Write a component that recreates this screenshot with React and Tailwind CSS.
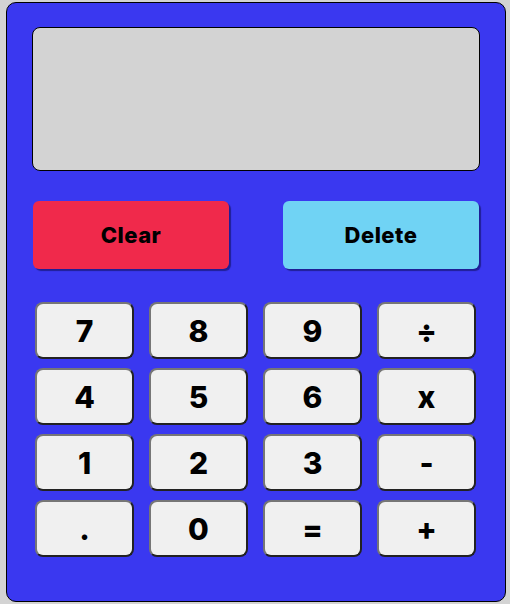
import React, { useState } from "react";

const keys = ["7", "8", "9", "÷", "4", "5", "6", "x", "1", "2", "3", "-", ".", "0", "=", "+"];

function App() {
  const [display, setDisplay] = useState("");

  const press = (k) => {
    if (k === "=") {
      try {
        const expr = display.replace(/÷/g, "/").replace(/x/g, "*");
        // eslint-disable-next-line no-new-func
        setDisplay(String(Function(`return (${expr})`)()));
      } catch (err) {
        setDisplay("Error");
      }
      return;
    }
    setDisplay(display + k);
  };

  return (
    <div className="min-h-screen bg-[#d3d3d3] pt-[2px] pl-[6px]" style={{ fontFamily: "Inter, 'Noto Sans', sans-serif" }}>
      <div className="w-[500px] h-[600px] bg-[#3a38f0] border border-black rounded-[10px] px-[25px] pt-[24px]">
        <div className="h-[144px] bg-[#d3d3d3] border border-black rounded-[8px] flex items-center justify-end px-4 text-[36px] font-bold text-black overflow-hidden">
          {display}
        </div>

        <div className="flex justify-between mt-[30px] px-[1px]">
          <button
            onClick={() => setDisplay("")}
            className="w-[196px] h-[68px] bg-[#f0294b] rounded-[6px] text-[22px] font-extrabold tracking-[0.5px] text-black shadow-[2px_2px_1px_rgba(0,0,40,0.45)]"
          >
            Clear
          </button>
          <button
            onClick={() => setDisplay(display.slice(0, -1))}
            className="w-[196px] h-[68px] bg-[#70d3f4] rounded-[6px] text-[22px] font-extrabold tracking-[0.5px] text-black shadow-[2px_2px_1px_rgba(0,0,40,0.45)]"
          >
            Delete
          </button>
        </div>

        <div className="grid grid-cols-4 gap-x-[15px] gap-y-[9px] mt-[33px] w-[441px] ml-[3px]">
          {keys.map((k) => (
            <button
              key={k}
              onClick={() => press(k)}
              className="h-[57px] bg-[#f0f0f0] rounded-[8px] border-2 border-t-[#767676] border-l-[#767676] border-b-[#222] border-r-[#222] text-[30px] font-extrabold text-black leading-none"
            >
              {k}
            </button>
          ))}
        </div>
      </div>
    </div>
  );
}

export default App;
